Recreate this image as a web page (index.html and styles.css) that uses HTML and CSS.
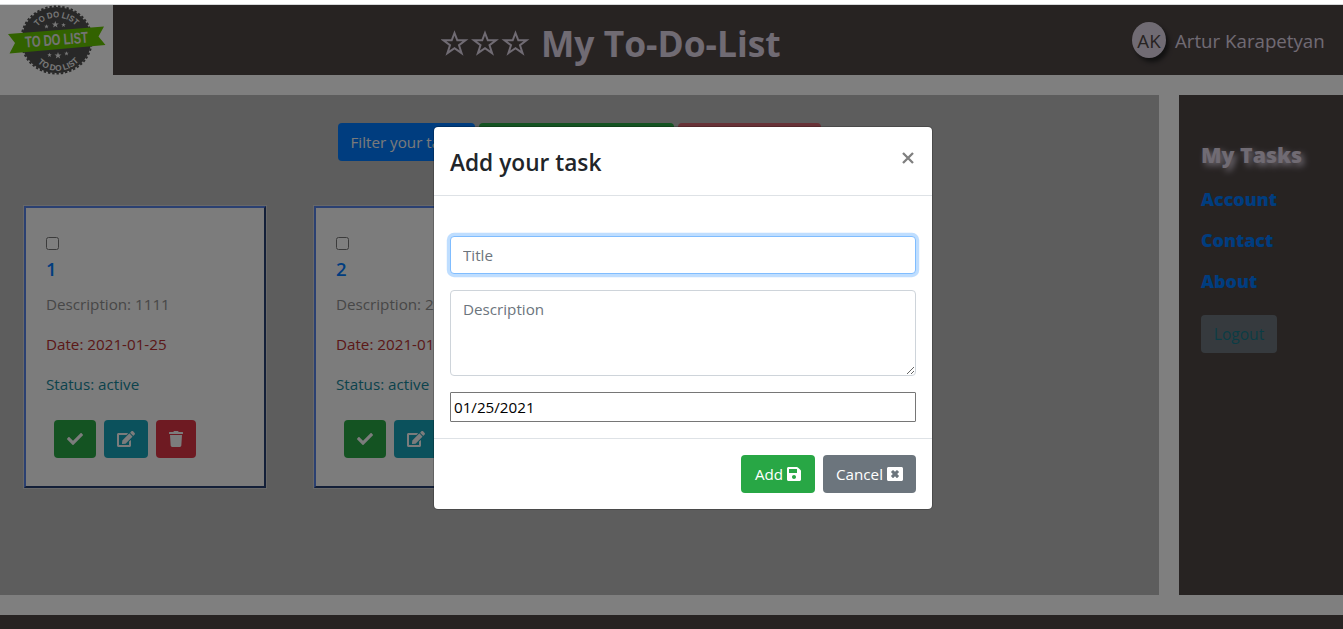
FILE: index.html
```html
<!DOCTYPE html>
<html lang="en">
<head>
<meta charset="utf-8">
<title>My To-Do-List</title>
<link rel="stylesheet" href="styles.css">
</head>
<body>
<svg class="defs" width="0" height="0" aria-hidden="true">
  <symbol id="check" viewBox="0 0 512 512"><path fill="currentColor" d="M173.9 439.4L7.5 273c-10-10-10-26.200 0-36.200l36.200-36.200c10-10 26.200-10 36.200 0L192 312.700 432.100 72.600c10-10 26.200-10 36.200 0l36.200 36.200c10 10 10 26.200 0 36.200L210.100 439.400c-10 10-26.200 10-36.200 0z"/></symbol>
  <symbol id="edit" viewBox="0 0 576 512"><path fill="currentColor" d="M402.600 83.200l90.200 90.200c3.800 3.800 3.800 10 0 13.800L274.400 405.600l-92.800 10.300c-12.400 1.400-22.900-9.100-21.500-21.500l10.300-92.800L388.800 83.200c3.800-3.800 10-3.800 13.800 0zm162-22.900l-48.800-48.800c-15.200-15.200-39.900-15.200-55.200 0l-35.400 35.400c-3.800 3.800-3.800 10 0 13.800l90.200 90.200c3.800 3.800 10 3.800 13.800 0l35.400-35.400c15.200-15.300 15.200-40 0-55.200zM384 346.200V448H64V128h229.800c3.200 0 6.200-1.300 8.500-3.500l40-40c7.600-7.600 2.200-20.500-8.500-20.500H48C21.500 64 0 85.500 0 112v352c0 26.500 21.500 48 48 48h352c26.500 0 48-21.500 48-48V306.200c0-10.700-12.900-16-20.500-8.500l-40 40c-2.200 2.300-3.500 5.300-3.500 8.500z"/></symbol>
  <symbol id="trash" viewBox="0 0 448 512"><path fill="currentColor" d="M432 32H312l-9.400-18.700A24 24 0 0 0 281.100 0H166.800a23.700 23.700 0 0 0-21.400 13.300L136 32H16A16 16 0 0 0 0 48v32a16 16 0 0 0 16 16h416a16 16 0 0 0 16-16V48a16 16 0 0 0-16-16zM53.200 467a48 48 0 0 0 47.900 45h245.800a48 48 0 0 0 47.900-45L416 128H32z"/></symbol>
  <symbol id="save" viewBox="0 0 448 512"><path fill="currentColor" d="M433.900 129.900l-83.800-83.800A48 48 0 0 0 316.100 32H48C21.500 32 0 53.500 0 80v352c0 26.500 21.500 48 48 48h352c26.500 0 48-21.500 48-48V163.900a48 48 0 0 0-14.100-34zM224 416c-35.300 0-64-28.700-64-64s28.700-64 64-64 64 28.700 64 64-28.700 64-64 64zm96-304.500V212c0 6.600-5.400 12-12 12H76c-6.600 0-12-5.400-12-12V108c0-6.600 5.400-12 12-12h228.500c3.200 0 6.200 1.300 8.500 3.500l3.500 3.500a12 12 0 0 1 3.500 8.500z"/></symbol>
  <symbol id="close" viewBox="0 0 512 512"><path fill="currentColor" fill-rule="evenodd" d="M464 32H48C21.500 32 0 53.500 0 80v352c0 26.500 21.500 48 48 48h416c26.500 0 48-21.500 48-48V80c0-26.500-21.500-48-48-48zM380 310c5 5 5 12 0 17l-53 53c-5 5-12 5-17 0l-54-54-54 54c-5 5-12 5-17 0l-53-53c-5-5-5-12 0-17l54-54-54-54c-5-5-5-12 0-17l53-53c5-5 12-5 17 0l54 54 54-54c5-5 12-5 17 0l53 53c5 5 5 12 0 17l-54 54z"/></symbol>
</svg>

<div class="page">
  <header class="header">
    <div class="logo">
      <svg width="113" height="70" viewBox="0 5 113 70">
        <defs>
          <path id="arc-top" d="M34.500 31A25.500 25.500 0 0 1 79 30"/>
          <path id="arc-bottom" d="M32 55A28.500 28.500 0 0 0 84 53"/>
          <polygon id="star" points="0,-3.500 .9,-1.100 3.500,-1.100 1.400,.5 2.200,3 0,1.600 -2.200,3 -1.400,.5 -3.500,-1.100 -.9,-1.100"/>
        </defs>
        <ellipse cx="56.500" cy="40" rx="34.800" ry="33" fill="#505050"/>
        <ellipse cx="56.500" cy="40" rx="35.300" ry="33.500" fill="none" stroke="#505050" stroke-width="2" stroke-dasharray="2.400 1.900"/>
        <g class="logo-arc"><text><textPath href="#arc-top" startOffset="50%" textLength="43" lengthAdjust="spacingAndGlyphs">TO DO LIST</textPath></text>
        <text><textPath href="#arc-bottom" startOffset="50%" textLength="46" lengthAdjust="spacingAndGlyphs">TO DO LIST</textPath></text></g>
        <g fill="#efefef">
          <use href="#star" transform="translate(55.300 24.500)"/>
          <use href="#star" transform="translate(46.500 26.500) scale(.65)"/>
          <use href="#star" transform="translate(63.500 25) scale(.65)"/>
          <use href="#star" transform="translate(58 55.500)"/>
          <use href="#star" transform="translate(49.500 55) scale(.65)"/>
          <use href="#star" transform="translate(66.500 53.500) scale(.65)"/>
        </g>
        <polygon points="8,34 104,26.500 98.500,36.500 105.500,45 9.500,53.500 15,43" fill="#65c400"/>
        <text class="logo-band" x="56.500" y="45" transform="rotate(-4.500 56.500 40)" textLength="63" lengthAdjust="spacingAndGlyphs">TO DO LIST</text>
      </svg>
    </div>
    <h1 class="brand">
      <svg class="stars" width="90" height="28" viewBox="0 0 90 28">
        <defs><path id="outline-star" d="M13.500 4L16.300 11.300H24.500l-6.500 4.900 2.600 7.900-7.100-5-7.100 5 2.600-7.900-6.500-4.900h8.200z"/></defs>
        <g fill="none" stroke="currentColor" stroke-width="2"><use href="#outline-star"/><use href="#outline-star" x="30.500"/><use href="#outline-star" x="61"/></g>
      </svg>
      <span class="brand-name">My To-Do-List</span>
    </h1>
    <div class="user"><span class="avatar">AK</span><span class="user-name">Artur Karapetyan</span></div>
  </header>

  <div class="content">
    <main class="board">
      <div class="toolbar">
        <button class="btn primary filter">Filter your tasks</button>
        <button class="btn success add-new"></button>
        <button class="btn danger remove" disabled></button>
      </div>
      <div class="cards">
        <article class="card">
          <input type="checkbox" class="pick">
          <a class="card-title">1</a>
          <p class="muted">Description: 1111</p>
          <p class="date">Date: 2021-01-25</p>
          <p class="status">Status: active</p>
          <div class="actions">
            <button class="btn success done"><svg width="16" height="16"><use href="#check"/></svg></button>
            <button class="btn info"><svg width="18" height="16"><use href="#edit"/></svg></button>
            <button class="btn danger"><svg width="14" height="16"><use href="#trash"/></svg></button>
          </div>
        </article>
        <article class="card">
          <input type="checkbox" class="pick">
          <a class="card-title">2</a>
          <p class="muted">Description: 2222</p>
          <p class="date">Date: 2021-01-25</p>
          <p class="status">Status: active</p>
          <div class="actions">
            <button class="btn success done"><svg width="16" height="16"><use href="#check"/></svg></button>
            <button class="btn info"><svg width="18" height="16"><use href="#edit"/></svg></button>
            <button class="btn danger"><svg width="14" height="16"><use href="#trash"/></svg></button>
          </div>
        </article>
      </div>
    </main>
    <nav class="side">
      <a class="active">My Tasks</a>
      <a class="account">Account</a>
      <a class="contact">Contact</a>
      <a class="about">About</a>
      <button class="btn logout">Logout</button>
    </nav>
  </div>
  <footer class="footer"></footer>
</div>

<div class="backdrop">
  <div class="modal">
    <div class="modal-header"><h2>Add your task</h2>
      <svg class="dismiss" width="12" height="12" viewBox="0 0 12 12"><path d="M1 1l10 10M11 1L1 11" stroke="#7f7f7f" stroke-width="2.300"/></svg>
    </div>
    <div class="modal-body">
      <input class="field title-field" placeholder="Title">
      <textarea class="field notes" placeholder="Description"></textarea>
      <input class="date-field" value="01/25/2021">
    </div>
    <div class="modal-footer">
      <button class="btn success save">Add <svg width="14" height="16"><use href="#save"/></svg></button>
      <button class="btn secondary cancel">Cancel <svg width="16" height="16"><use href="#close"/></svg></button>
    </div>
  </div>
</div>
</body>
</html>
```

FILE: styles.css
```css
* { box-sizing: border-box; }
body { margin: 0; height: 629px; overflow: hidden; background: #fff; color: #212529; font: 15.2px/24px "Open Sans", "Noto Sans", sans-serif; }
h1, h2, p { margin: 0; }
svg { flex: none; }
.defs { position: absolute; }
.page { height: 629px; padding-top: 5px; display: flex; flex-direction: column; gap: 20px; }
.header { height: 70px; flex: none; display: flex; align-items: center; background: #4e4645; color: #e0d6e6; }
.logo { width: 113px; height: 70px; background: #fff; }
.logo svg { display: block; }
.logo-arc text { font: bold 8.500px "Liberation Sans", sans-serif; fill: #efefef; text-anchor: middle; }
.logo-band { font: bold 15.500px "Liberation Sans", sans-serif; fill: #e6e6e6; text-anchor: middle; }
.brand { margin-left: 328px; width: 691px; display: flex; align-items: center; gap: 10px; font-size: 35.400px; line-height: 48px; font-weight: 700; padding-top: 5px; }
.brand-name { white-space: nowrap; }
.user { display: flex; align-items: center; gap: 9px; font-size: 18.700px; white-space: nowrap; }
.user-name { padding-top: 2px; }
.avatar { width: 34px; height: 36px; border-radius: 50%; background: #e0d6e6; color: #4e4645; text-align: center; line-height: 37px; box-shadow: 3px 4px 4px #222; }
.content { height: 500px; flex: none; display: grid; grid-template-columns: 1159px 164px; gap: 20px; }
.board { background: #bababa; padding: 28px 24px; }
.toolbar { display: flex; justify-content: center; gap: 4px; margin-right: 1px; }
.btn { height: 38px; padding: 0 13px; border: 0; border-radius: 4px; font: inherit; color: #fff; display: flex; align-items: center; justify-content: center; gap: 4px; white-space: nowrap; }
.primary { background: #007bff; }
.success { background: #28a745; }
.info { background: #17a2b8; }
.danger { background: #dc3545; }
.secondary { background: #6c757d; }
.toolbar .btn { color: #f4f4f4; }
.filter { width: 137px; justify-content: flex-start; }
.add-new { width: 195px; }
.remove { width: 143px; opacity: .65; }
.cards { display: flex; gap: 48px; margin-top: 45px; }
.card { width: 242px; height: 282px; background: #f8f8f8; border: 2px solid; border-color: #5680e2 #263e70 #263e70 #5680e2; box-shadow: 0 0 0 1px #d0d0d0; padding: 29px 20px 0; display: flex; flex-direction: column; align-items: flex-start; }
.pick { width: 13px; height: 13px; margin: 0 0 7px; }
.card-title { color: #007bff; font-size: 18.500px; line-height: 24px; font-weight: 600; margin-bottom: 11px; }
.card p { margin-bottom: 16px; white-space: nowrap; }
.muted { color: #8f8f8f; }
.date { color: #b63030; }
.status { color: #17869a; }
.actions { display: flex; gap: 8px; margin: 8px 0 0 8px; }
.actions svg { color: #f8f8f8; }
.side { background: #4e4645; padding: 48px 22px; display: flex; flex-direction: column; align-items: flex-start; font-weight: 800; font-size: 17.900px; line-height: 24px; color: #007bff; }
.side a { margin-bottom: 17px; white-space: nowrap; }
.side .active { font-size: 21.300px; color: #e0d6e6; text-shadow: 3px 3px 6px #e0d6e6; margin-bottom: 20px; }
.side .logout { width: 76px; margin-top: 5px; background: #6c757d; color: #17798a; font-weight: 400; font-size: 15.600px; }
.footer { height: 14px; flex: none; background: #4e4645; }
.backdrop { position: absolute; inset: 4px 0 0; background: rgba(0, 0, 0, .5); border-top: 1px solid #d6d8d9; background-clip: padding-box; }
.modal { width: 500px; height: 384px; margin: 121px 0 0 433px; background: #fff; background-clip: padding-box; border: 1px solid rgba(0, 0, 0, .2); border-radius: 5px; }
.modal-header { height: 69px; border-bottom: 1px solid #dee2e6; padding: 16px; display: flex; justify-content: space-between; }
.modal-header h2 { font-size: 22.700px; line-height: 40px; font-weight: 600; white-space: nowrap; }
.dismiss { margin: 9px 2px 0 0; }
.modal-body { height: 243px; border-bottom: 1px solid #dee2e6; padding: 40px 16px 0; display: flex; flex-direction: column; gap: 16px; }
.field { width: 466px; border: 1px solid #ced4da; border-radius: 4px; padding: 6px 12px; font: inherit; outline: 0; }
.field::placeholder { color: #6c757d; opacity: 1; }
.title-field { height: 38px; flex: none; border-color: #80bdff; box-shadow: 0 0 0 3.200px rgba(0, 123, 255, .25); }
.notes { height: 86px; flex: none; resize: vertical; }
.date-field { width: 466px; height: 30px; flex: none; border: 1px solid #767676; border-radius: 1px; padding: 1px 3px; font: inherit; color: #000; }
.modal-footer { display: flex; justify-content: flex-end; gap: 8px; padding: 16px; }
.save { width: 74px; }
.cancel { width: 93px; }
```
